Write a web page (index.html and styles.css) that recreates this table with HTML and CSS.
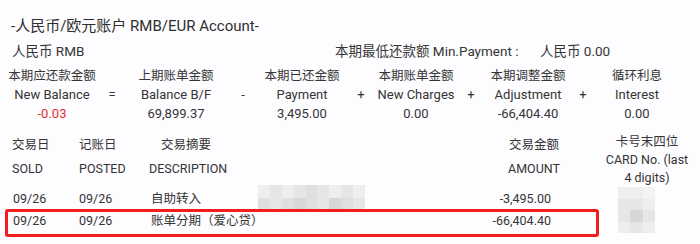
FILE: index.html
```html
<!DOCTYPE html>
<html lang="zh-CN">
<head>
<meta charset="utf-8">
<title>RMB/EUR Account</title>
<link rel="stylesheet" href="styles.css">
</head>
<body>
<div class="page">
  <div class="title">-人民币/欧元账户 RMB/EUR Account-</div>
  <div class="currency-row">
    <div class="currency">人民币 RMB</div>
    <div class="min-label">本期最低还款额 Min.Payment :</div>
    <div class="min-value">人民币 0.00</div>
  </div>

  <div class="summary">
    <div class="cell"><div>本期应还款金额</div><div>New Balance</div><div class="red">-0.03</div></div>
    <div class="op">=</div>
    <div class="cell"><div>上期账单金额</div><div>Balance B/F</div><div>69,899.37</div></div>
    <div class="op">-</div>
    <div class="cell"><div>本期已还金额</div><div>Payment</div><div>3,495.00</div></div>
    <div class="op">+</div>
    <div class="cell"><div>本期账单金额</div><div>New Charges</div><div>0.00</div></div>
    <div class="op">+</div>
    <div class="cell"><div>本期调整金额</div><div>Adjustment</div><div>-66,404.40</div></div>
    <div class="op">+</div>
    <div class="cell"><div>循环利息</div><div>Interest</div><div>0.00</div></div>
  </div>

  <div class="txn">
    <div class="trow head">
      <div class="th"><div>交易日</div><div class="en">SOLD</div></div>
      <div class="th"><div>记账日</div><div class="en">POSTED</div></div>
      <div class="th"><div class="zh-desc">交易摘要</div><div class="en">DESCRIPTION</div></div>
      <div class="th center"><div>交易金额</div><div class="en">AMOUNT</div></div>
      <div class="th card"><div>卡号末四位</div><div class="card-en">CARD No. (last 4 digits)</div></div>
    </div>

    <div class="trow">
      <div class="td">09/26</div>
      <div class="td">09/26</div>
      <div class="td d">自助转入</div>
      <div class="td amt">-3,495.00</div>
      <div class="td"></div>
    </div>

    <div class="trow">
      <div class="td">09/26</div>
      <div class="td">09/26</div>
      <div class="td d">账单分期（爱心贷）</div>
      <div class="td amt">-66,404.40</div>
      <div class="td"></div>
    </div>

    <div class="mosaic mosaic-desc">
      <i class="t1"></i><i class="t2"></i><i class="t1"></i><i class="t2"></i><i class="t3"></i><i class="t2"></i><i class="t1"></i><i class="t2"></i><i class="t1"></i>
      <i class="t3"></i><i class="t2"></i><i class="t3"></i><i class="t4"></i><i class="t3"></i><i class="t2"></i><i class="t4"></i><i class="t3"></i><i class="t2"></i>
    </div>
    <div class="mosaic mosaic-card">
      <i class="t1"></i><i class="t1"></i><i class="t0"></i>
      <i class="t2"></i><i class="t2"></i><i class="t1"></i>
      <i class="t2"></i><i class="t4"></i><i class="t2"></i>
      <i class="t1"></i><i class="t2"></i><i class="t1"></i>
    </div>
    <div class="highlight"></div>
  </div>
</div>
</body>
</html>
```
FILE: styles.css
```css
* { box-sizing: border-box; }
html, body { margin: 0; padding: 0; background: #fdfcfe; }
body {
  font-family: Roboto, "Noto Sans CJK SC", "Noto Sans", sans-serif;
  color: #353535;
  font-size: 13px;
}
.page { width: 700px; height: 244px; padding: 16px 0 0 0; overflow: hidden; }

.title { font-size: 15px; line-height: 20px; padding-left: 11px; color: #2e2e2e; }

.currency-row {
  display: grid;
  grid-template-columns: 335px 205px auto;
  align-items: center;
  height: 20px;
  margin-top: 4px;
  font-size: 13.5px;
}
.currency { padding-left: 12px; }

.summary {
  display: grid;
  grid-template-columns: 104px 16px 112px 22px 96px 22px 88px 22px 92px 18px 90px;
  margin-top: 6px;
  line-height: 19px;
}
.cell { text-align: center; white-space: nowrap; }
.cell div:first-child { font-size: 12.5px; }
.op { text-align: center; padding-top: 19px; }
.red { color: #e03131; }

.txn {
  position: relative;
  margin-top: 10px;
  font-size: 12.5px;
}
.trow {
  display: grid;
  grid-template-columns: 79px 70px 341px 88px 111px;
}
.trow > :first-child { padding-left: 12px; }

.th { line-height: 18px; padding-top: 3px; }
.th .en { margin-top: 6px; }
.th.center { text-align: center; }
.zh-desc { padding-left: 12px; }
.th.card { padding-top: 0; padding-left: 27px; text-align: center; }
.card-en { width: 84px; margin: 0 auto; }

.trow.head { margin-bottom: 1px; }
.td { line-height: 22px; white-space: nowrap; }
.trow > .td:first-child { padding-left: 13px; }
.td.d { padding-left: 2px; }
.td.amt { text-align: right; padding-right: 27px; }

.mosaic { position: absolute; display: grid; }
.mosaic i { display: block; }
.mosaic-desc { left: 258px; top: 52px; width: 107px; height: 25px; grid-template-columns: repeat(9, 1fr); grid-template-rows: 1fr 1fr; }
.mosaic-card { left: 618px; top: 54px; width: 37px; height: 46px; grid-template-columns: repeat(3, 1fr); grid-template-rows: repeat(4, 1fr); }
.t0 { background: #f3f2f4; }
.t1 { background: #eeedef; }
.t2 { background: #e6e5e7; }
.t3 { background: #dfdee0; }
.t4 { background: #d7d6d8; }

.highlight {
  position: absolute;
  left: 5px;
  top: 76px;
  width: 594px;
  height: 28px;
  border: 3px solid #f21d1d;
  border-radius: 3px;
  pointer-events: none;
}
```
